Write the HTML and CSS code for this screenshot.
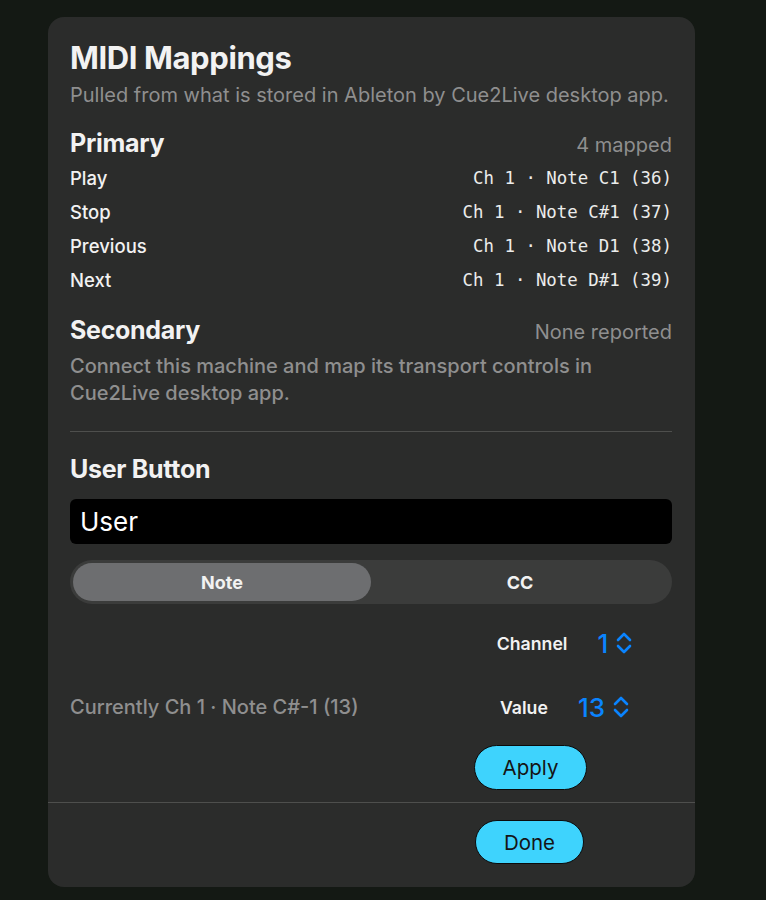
FILE: index.html
```html
<!DOCTYPE html>
<html lang="en">
<head>
    <meta charset="UTF-8">
    <meta name="viewport" content="width=device-width, initial-scale=1.0">
    <title>MIDI Mappings</title>
    <link rel="stylesheet" href="styles.css">
</head>
<body>
    <div class="sheet">
        <div class="sheet-body">
            <h1>MIDI Mappings</h1>
            <p class="subtitle">Pulled from what is stored in Ableton by Cue2Live desktop app.</p>

            <!-- Primary machine -->
            <div class="section-head">
                <h2>Primary</h2>
                <span class="meta">4 mapped</span>
            </div>
            <ul class="map-list">
                <li><span>Play</span><code>Ch 1 · Note C1 (36)</code></li>
                <li><span>Stop</span><code>Ch 1 · Note C#1 (37)</code></li>
                <li><span>Previous</span><code>Ch 1 · Note D1 (38)</code></li>
                <li><span>Next</span><code>Ch 1 · Note D#1 (39)</code></li>
            </ul>

            <!-- Secondary machine -->
            <div class="section-head secondary">
                <h2>Secondary</h2>
                <span class="meta">None reported</span>
            </div>
            <p class="hint">Connect this machine and map its transport controls in Cue2Live desktop app.</p>

            <hr class="divider">

            <!-- User button -->
            <h2 class="user-title">User Button</h2>
            <input class="name-field" type="text" value="User">
            <div class="segmented">
                <button class="seg active">Note</button>
                <button class="seg">CC</button>
            </div>

            <div class="stepper-row">
                <div class="current"></div>
                <div class="stepper-col">
                    <div class="stepper">
                        <span class="stepper-label">Channel</span>
                        <span class="stepper-value">1</span>
                        <svg class="chevrons" width="18" height="24" viewBox="0 0 18 24"><path d="M3 9 L9 3 L15 9 M3 15 L9 21 L15 15"/></svg>
                    </div>
                </div>
            </div>
            <div class="stepper-row value-row">
                <div class="current">Currently Ch 1 · Note C#-1 (13)</div>
                <div class="stepper-col">
                    <div class="stepper">
                        <span class="stepper-label">Value</span>
                        <span class="stepper-value">13</span>
                        <svg class="chevrons" width="18" height="24" viewBox="0 0 18 24"><path d="M3 9 L9 3 L15 9 M3 15 L9 21 L15 15"/></svg>
                    </div>
                </div>
            </div>
            <div class="action-row">
                <button class="pill apply">Apply</button>
            </div>
        </div>

        <div class="sheet-footer">
            <button class="pill done">Done</button>
        </div>
    </div>
</body>
</html>
```

FILE: styles.css
```css
* { margin: 0; padding: 0; box-sizing: border-box; }
body { background: #141914; font-family: 'Inter', 'Noto Sans', sans-serif; color: #f2f2f2; }

.sheet { width: 647px; height: 870px; margin: 17px 0 0 48px; background: #2b2c2b; border-radius: 16px; display: flex; flex-direction: column; overflow: hidden; }
.sheet-body { padding: 24px 23px 0 22px; }

h1 { font-size: 31px; font-weight: 700; letter-spacing: -0.4px; line-height: 34px; }
.subtitle { font-size: 20px; color: #8f8f8f; margin-top: 8px; line-height: 24px; }

.section-head { display: flex; justify-content: space-between; align-items: baseline; margin-top: 21px; }
.section-head h2 { font-size: 25px; font-weight: 700; letter-spacing: -0.3px; line-height: 30px; }
.section-head .meta { font-size: 20px; color: #8f8f8f; }
.section-head.secondary { margin-top: 18px; }

.map-list { list-style: none; margin-top: 3px; }
.map-list li { display: flex; justify-content: space-between; align-items: center; height: 34px; font-size: 18.5px; font-weight: 500; }
.map-list code { font-family: 'DejaVu Sans Mono', monospace; font-size: 17.4px; color: #ececec; }

.hint { font-size: 20px; font-weight: 500; color: #8f8f8f; line-height: 27px; margin-top: 8px; }

.divider { border: none; border-top: 1px solid #4e4f4d; margin: 24px 0 0; }

.user-title { font-size: 25px; font-weight: 700; letter-spacing: -0.3px; line-height: 30px; margin-top: 22px; }
.name-field { display: block; width: 100%; height: 45px; margin-top: 15px; background: #000; border: none; border-radius: 6px; color: #fff; font-family: inherit; font-size: 26px; padding: 0 10px; outline: none; }

.segmented { display: flex; margin-top: 16px; height: 44px; background: #3b3c3b; border-radius: 22px; padding: 3px; }
.seg { flex: 1; border: none; background: none; color: #f2f2f2; font-family: inherit; font-size: 18px; font-weight: 700; border-radius: 19px; }
.seg.active { background: #6d6e70; }

.stepper-row { display: flex; justify-content: space-between; align-items: center; height: 64px; margin-top: 7px; }
.value-row { margin-top: 0; }
.current { font-size: 20px; font-weight: 500; color: #8f8f8f; }
.stepper-col { width: 214px; display: flex; justify-content: center; }
.stepper { display: flex; align-items: center; }
.stepper-label { font-size: 17.7px; font-weight: 600; margin-right: 30px; }
.stepper-value { font-size: 26px; font-weight: 500; color: #0a84ff; margin-right: 7px; }
.chevrons path { fill: none; stroke: #0a84ff; stroke-width: 2.6; stroke-linecap: round; stroke-linejoin: round; }

.action-row { padding-left: 404px; margin-top: 6px; }
.pill { height: 45px; border: 1.5px solid #0b0b0b; border-radius: 23px; background: #3ed3fd; color: #151515; font-family: inherit; font-size: 20.5px; }
.apply { width: 113px; }

.sheet-footer { border-top: 1px solid #4e4f4d; margin-top: 12px; padding: 17px 0 0 427px; }
.done { width: 109px; height: 44px; }
```
